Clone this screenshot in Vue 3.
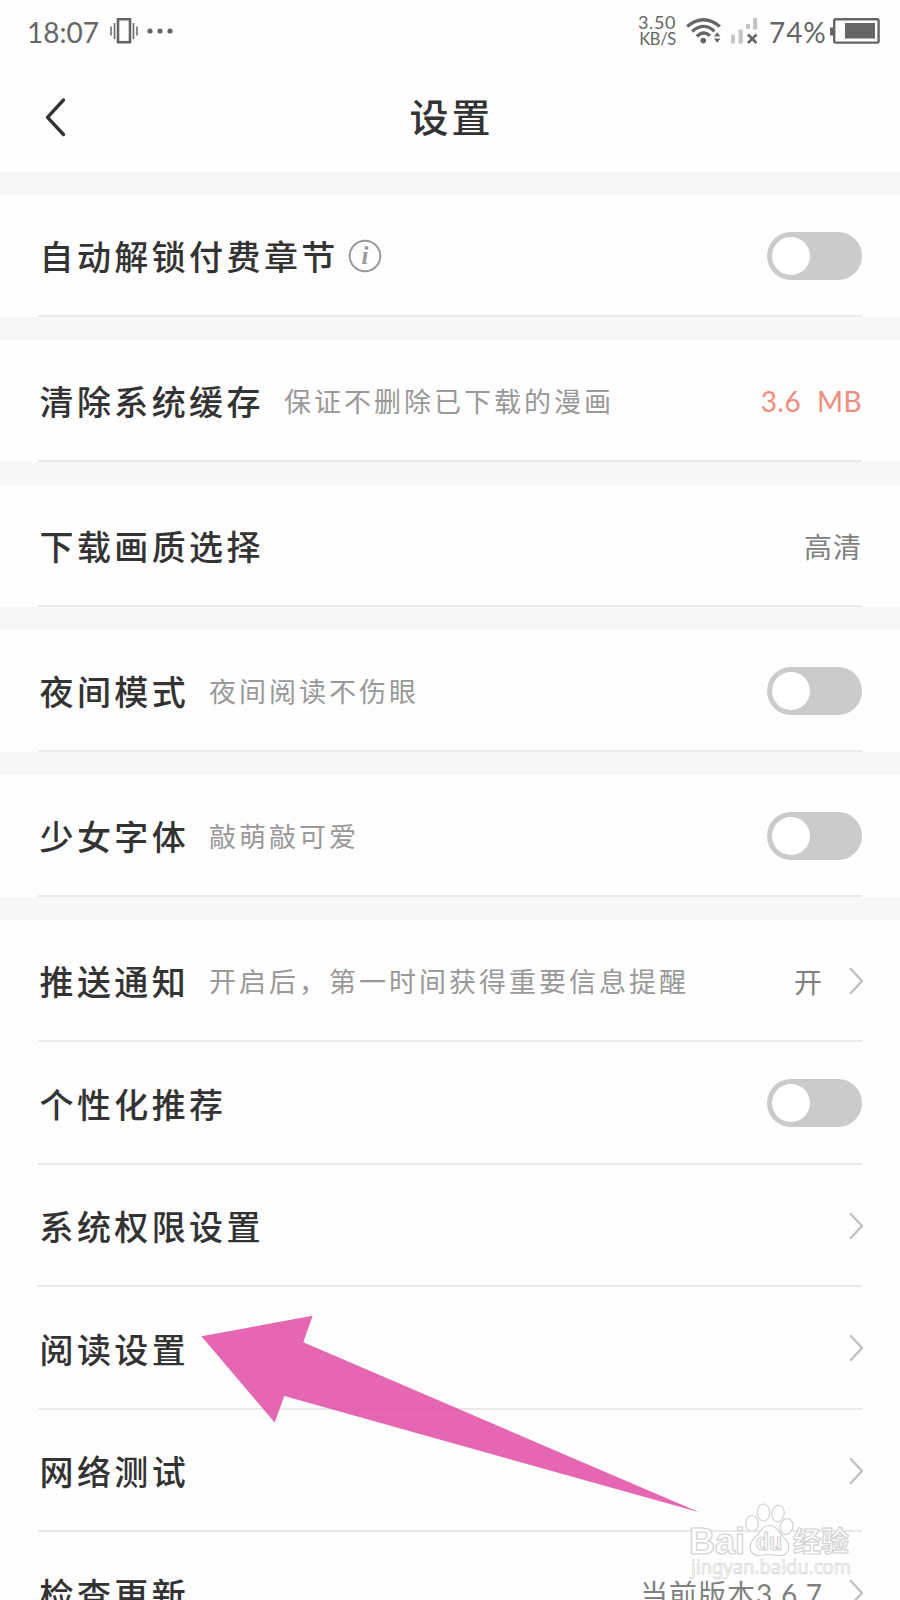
<script setup>
import { reactive } from "vue";

const groups = reactive([
  [{ label: "自动解锁付费章节", info: true, toggle: true, on: false }],
  [{ label: "清除系统缓存", hint: "保证不删除已下载的漫画", value: "3.6 MB", accent: true }],
  [{ label: "下载画质选择", value: "高清" }],
  [{ label: "夜间模式", hint: "夜间阅读不伤眼", toggle: true, on: false }],
  [{ label: "少女字体", hint: "敲萌敲可爱", toggle: true, on: false }],
  [
    { label: "推送通知", hint: "开启后，第一时间获得重要信息提醒", value: "开", link: true },
    { label: "个性化推荐", toggle: true, on: false },
    { label: "系统权限设置", link: true },
    { label: "阅读设置", link: true },
    { label: "网络测试", link: true },
    { label: "检查更新", value: "当前版本3.6.7", link: true },
  ],
]);
</script>

<template>
  <div class="page">
    <!-- STATUS BAR -->
    <div class="status">
      <span class="time">18:07</span>
      <svg class="vibrate" width="28" height="26" viewBox="0 0 28 26">
        <rect x="8" y="1.2" width="12" height="23" fill="none" stroke="#666" stroke-width="2.6" />
        <path d="M4.5 5v16M1 8.5v9M23.5 5v16M27 8.5v9" stroke="#666" stroke-width="1.5" />
      </svg>
      <svg class="dots" width="26" height="6" viewBox="0 0 26 6" fill="#666">
        <circle cx="3" cy="3" r="2.6" />
        <circle cx="13" cy="3" r="2.6" />
        <circle cx="23" cy="3" r="2.6" />
      </svg>

      <div class="speed">
        <span>3.50</span>
        <span class="unit">KB/S</span>
      </div>
      <svg class="wifi" width="36" height="26" viewBox="0 0 36 26">
        <g fill="none" stroke="#666" stroke-width="3.2">
          <path d="M1.2 8.5Q17.500-5 33.800 8.500" />
          <path d="M6.2 13.500Q17.500 3.500 28.500 13.200" />
          <path d="M10.800 18.300Q17.500 12 24 17.800" />
        </g>
        <circle cx="17.3" cy="22.6" r="2.8" fill="#666" />
        <path d="M28 18.5l3.2-4.2 3.2 4.2zM28 20.5h6.400l-3.200 4.200z" fill="#666" />
      </svg>
      <svg class="signal" width="27" height="26" viewBox="0 0 27 26">
        <g fill="#c4c4c4">
          <rect x="0" y="16.5" width="4" height="9" rx="1" />
          <rect x="7.5" y="11.5" width="4.3" height="14" rx="1" />
          <rect x="15" y="6" width="4" height="5" rx="1" />
          <rect x="22" y="0" width="4.3" height="11.5" rx="1" />
        </g>
        <path d="M17 16.5l8.5 8.5M25.5 16.5L17 25" stroke="#666" stroke-width="2.6" />
      </svg>
      <span class="percent">74%</span>
      <svg class="battery" width="50" height="26" viewBox="0 0 50 26">
        <rect x="4.2" y="1.2" width="44.4" height="23.4" rx="1.5" fill="none" stroke="#666" stroke-width="2.4" />
        <path d="M0 9.5h4v8H0z" fill="#666" />
        <rect x="15" y="5" width="30" height="15.5" fill="#666" />
      </svg>
    </div>

    <!-- TITLE BAR -->
    <header class="header">
      <svg class="back" width="22" height="40" viewBox="0 0 22 40">
        <path d="M19.500 3L3.500 20.300 19.500 37.500" fill="none" stroke="#333" stroke-width="3.4" stroke-linecap="round" stroke-linejoin="round" />
      </svg>
      <h1>设置</h1>
    </header>

    <!-- SETTINGS -->
    <section v-for="(group, i) in groups" :key="i" class="group">
      <div v-for="row in group" :key="row.label" class="row">
        <span class="label">{{ row.label }}</span>
        <svg v-if="row.info" class="info" width="34" height="34" viewBox="0 0 34 34">
          <circle cx="17" cy="17" r="15.300" fill="none" stroke="#999" stroke-width="2" />
          <text x="17" y="25" text-anchor="middle">i</text>
        </svg>
        <span v-if="row.hint" class="hint">{{ row.hint }}</span>
        <span class="spacer"></span>
        <span v-if="row.value" :class="['value', { accent: row.accent }]">{{ row.value }}</span>
        <button
          v-if="row.toggle"
          :class="['toggle', { on: row.on }]"
          type="button"
          :aria-label="row.label"
          @click="row.on = !row.on"
        >
          <span class="knob"></span>
        </button>
        <svg v-if="row.link" class="chevron" width="15" height="28" viewBox="0 0 15 28">
          <path d="M2.8 2L14 14 2.8 26" fill="none" stroke="#c2c2c2" stroke-width="2.4" stroke-linecap="round" />
        </svg>
      </div>
    </section>

    <!-- pointer to the reading settings row -->
    <svg class="arrow" width="500" height="200" viewBox="0 0 500 200">
      <path d="M1.400 21.200L112.600 0.700 103.300 27.300 499.300 197.300 84.300 81 74.700 107.500z" fill="#e04ca3" fill-opacity="0.85" />
    </svg>

    <svg class="watermark" width="168" height="88" viewBox="0 0 168 88">
      <g fill="#fff" fill-opacity="0.85" stroke="#d2d2d2" stroke-width="1.2">
        <ellipse cx="66" cy="25.500" rx="6.300" ry="8" />
        <ellipse cx="77.500" cy="14.500" rx="6.200" ry="8.500" />
        <ellipse cx="92" cy="15.500" rx="6.200" ry="8.300" transform="rotate(8 92 15.5)" />
        <ellipse cx="100.500" cy="28.500" rx="6.300" ry="8" transform="rotate(18 100.5 28.5)" />
        <path d="M83.500 27.500C91 27.500 93 35 98 39.500C105 46 104.500 57.500 94 57.500C89 57.500 88 56.500 83.500 56.500C79 56.500 77 57.500 73 57.500C62 57.500 62 46 69 39.500C74 35 76 27.500 83.500 27.500z" />
        <g class="mark">
          <text x="3" y="56" font-size="37" textLength="56" lengthAdjust="spacingAndGlyphs">Bai</text>
          <text x="70" y="52" font-size="23" textLength="26" lengthAdjust="spacingAndGlyphs">du</text>
          <text class="cjk" x="107" y="54" font-size="28" textLength="56">经验</text>
        </g>
        <text class="url" x="5" y="76" font-size="20" textLength="160" lengthAdjust="spacingAndGlyphs">jingyan.baidu.com</text>
      </g>
    </svg>
  </div>
</template>

<style>
body {
  margin: 0;
  background: #fefefe;
}
</style>

<style scoped>
.page {
  position: relative;
  width: 900px;
  height: 1600px;
  overflow: hidden;
  background: #f7f7f7;
  color: #333;
  font-family: Lato, "Noto Sans CJK SC", sans-serif;
}

/* ===== STATUS BAR ===== */
.status {
  display: flex;
  align-items: center;
  box-sizing: border-box;
  height: 62px;
  padding: 0 20px 0 27px;
  background: #fefefe;
  color: #666;
}

.time {
  width: 83px;
  font-size: 28px;
  padding-top: 2px;
  box-sizing: border-box;
}

.dots {
  margin-left: 9px;
}

.speed {
  display: flex;
  flex-direction: column;
  align-items: flex-end;
  margin-left: auto;
  font-size: 18px;
  letter-spacing: 0.6px;
  line-height: 17.5px;
}

.speed .unit {
  font-size: 16.5px;
  letter-spacing: -0.3px;
}

.wifi {
  margin-left: 10px;
}

.signal {
  margin-left: 9px;
}

.percent {
  box-sizing: border-box;
  width: 61px;
  margin-left: 11px;
  padding-top: 2px;
  font-size: 28px;
  letter-spacing: 0.9px;
  white-space: nowrap;
}

/* ===== TITLE BAR ===== */
.header {
  display: grid;
  grid-template-columns: 1fr auto 1fr;
  align-items: center;
  height: 110px;
  padding: 0 44px;
  background: #fefefe;
}

.header h1 {
  margin: 0 -3px 5px 0;
  font-size: 39px;
  font-weight: 500;
  letter-spacing: 3px;
}

/* ===== GROUPS ===== */
.group {
  margin-top: 22.5px;
  background: #fefefe;
}

.row {
  display: flex;
  align-items: center;
  box-sizing: border-box;
  height: 122.5px;
  margin: 0 38px;
  padding-top: 2px;
  border-bottom: 2px solid #e9e9e9;
  white-space: nowrap;
}

.label {
  margin-left: 1.5px;
  font-size: 34px;
  font-weight: 500;
  letter-spacing: 3.4px;
}

.info {
  margin-left: 9px;
}

.info text {
  font-family: "Liberation Serif", serif;
  font-size: 25px;
  font-style: italic;
  font-weight: bold;
  fill: #999;
}

.hint {
  margin-left: 20px;
  color: #999;
  font-size: 27px;
  letter-spacing: 3px;
}

.spacer {
  flex: 1;
}

.value {
  color: #808080;
  font-size: 28px;
  letter-spacing: 1px;
}

.value.accent {
  color: #f08b7d;
  letter-spacing: 0.4px;
  word-spacing: 8.5px;
}

.toggle {
  display: flex;
  box-sizing: border-box;
  width: 95px;
  height: 48px;
  padding: 5px;
  border: none;
  border-radius: 24px;
  background: #cbcbcb;
}

.toggle.on {
  justify-content: flex-end;
  background: #f08b7d;
}

.knob {
  width: 38px;
  height: 38px;
  border-radius: 50%;
  background: #fff;
}

.value + .chevron {
  margin-left: 25px;
}

.chevron {
  margin-right: -1px;
}

/* ===== OVERLAYS ===== */
.arrow {
  position: absolute;
  top: 1315px;
  left: 200px;
}

.watermark {
  position: absolute;
  top: 1498px;
  left: 686px;
}

.mark {
  font-family: "Liberation Sans", sans-serif;
  font-weight: bold;
}

.mark .cjk {
  font-family: "Noto Sans CJK SC", sans-serif;
}

.url {
  font-family: "Noto Sans", sans-serif;
  stroke-width: 0.7;
}
</style>
